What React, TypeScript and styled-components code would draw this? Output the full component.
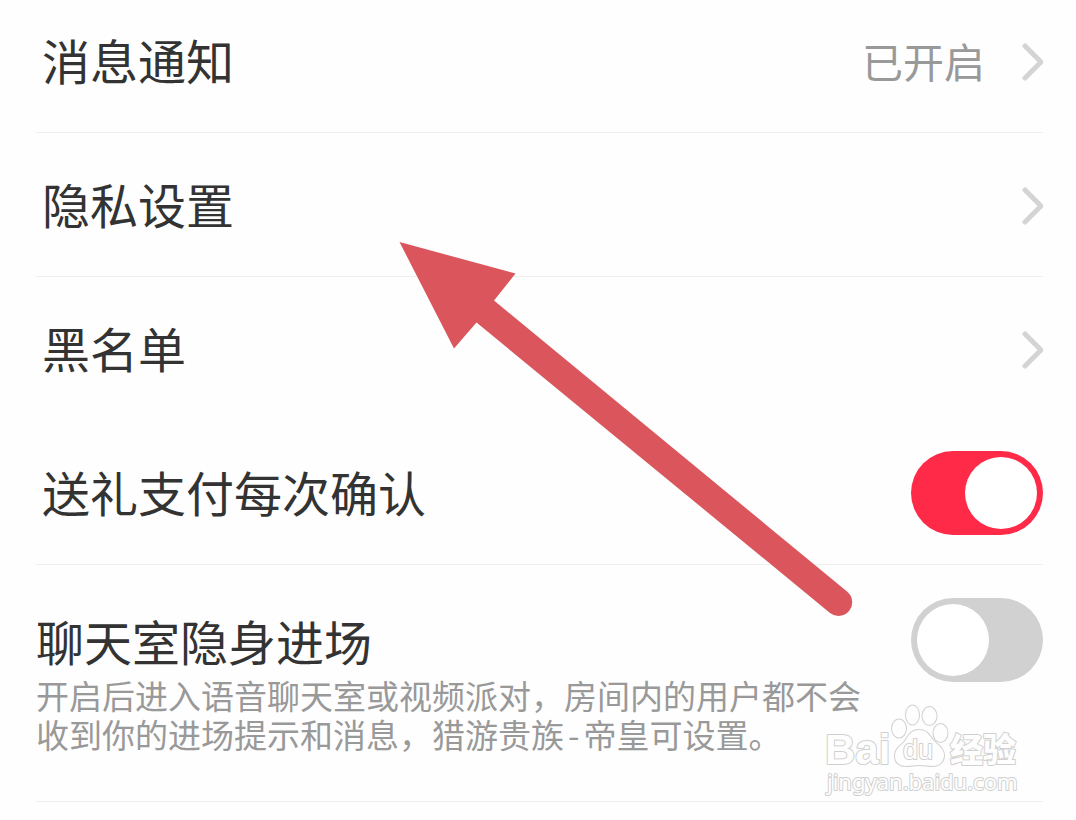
import React from 'react';
import styled, { createGlobalStyle } from 'styled-components';

const GlobalStyle = createGlobalStyle`
  * { box-sizing: border-box; }
  body {
    margin: 0;
    background: #fefefe;
    color: #333;
    font-family: "Noto Sans CJK SC", sans-serif;
  }
`;

const Page = styled.main`
  position: relative;
  padding: 0 33px 18px 36px;
  overflow: hidden;
`;

const List = styled.ul`
  margin: 0;
  padding: 0;
  list-style: none;
`;

const Item = styled.li<{ $divided?: boolean }>`
  border-bottom: 1px solid ${(p) => (p.$divided ? '#efefef' : 'transparent')};
`;

const rowBase = `
  display: flex;
  align-items: center;
  justify-content: space-between;
  width: 100%;
  padding: 39px 0 36px 6px;
  font-size: 48px;
  line-height: 62px;
`;

const LinkRow = styled.a`
  ${rowBase}
  color: inherit;
  text-decoration: none;
  ${Item}:first-child & { padding-top: 28px; }
`;

const SwitchRow = styled.div`
  ${rowBase}
`;

const Title = styled.span`
  padding-bottom: 6px;
`;

const Label = styled.label``;

const Trailing = styled.span`
  display: flex;
  align-items: center;
  gap: 36px;
`;

const Status = styled.span`
  padding-bottom: 4px;
  color: #999;
  font-size: 41px;
`;

const ChevronIcon = styled.svg`
  display: block;
  width: 22px;
  height: 40px;
  fill: none;
  stroke: #d4d4d4;
  stroke-width: 5;
  stroke-linecap: round;
  stroke-linejoin: round;
`;

const Switch = styled.input`
  appearance: none;
  display: flex;
  align-items: center;
  flex: none;
  width: 132px;
  height: 84px;
  margin: -9px 0 -7px;
  padding: 0 6px;
  border-radius: 42px;
  background: #d1d1d1;
  cursor: pointer;

  &::before {
    content: "";
    width: 72px;
    height: 72px;
    border-radius: 50%;
    background: #fff;
  }

  &:checked {
    justify-content: flex-end;
    background: #ff2a48;
  }
`;

const DetailRow = styled.div`
  display: flex;
  align-items: flex-start;
  justify-content: space-between;
  padding: 39px 0 47px;
`;

const DetailText = styled.div`
  max-width: 832px;
  font-size: 48px;
  line-height: 72px;
`;

const DetailSwitch = styled(Switch)`
  margin: -6px 0 0;
`;

const Description = styled.p`
  margin: 0;
  color: #999;
  font-size: 33px;
  line-height: 39px;
`;

const Dash = styled.span`
  margin: 0 4px;
`;

const Arrow = styled.svg`
  position: absolute;
  top: 241px;
  left: 399px;
  width: 456px;
  height: 378px;
  fill: #da565c;
  pointer-events: none;
`;

const Watermark = styled.svg`
  position: absolute;
  top: 700px;
  right: 52px;
  width: 200px;
  height: 100px;
  pointer-events: none;
  fill: #fefefe;
  stroke: #d0d0d0;
  stroke-width: 2;
  stroke-linejoin: round;
  paint-order: stroke;
`;

const Chevron = () => (
  <ChevronIcon viewBox="0 0 22 40" aria-hidden="true">
    <path d="M4 4 20 20 4 36" />
  </ChevronIcon>
);

export default function App() {
  return (
    <Page>
      <GlobalStyle />
      <List>
        <Item $divided>
          <LinkRow href="#notifications">
            <Title>消息通知</Title>
            <Trailing>
              <Status>已开启</Status>
              <Chevron />
            </Trailing>
          </LinkRow>
        </Item>
        <Item $divided>
          <LinkRow href="#privacy">
            <Title>隐私设置</Title>
            <Chevron />
          </LinkRow>
        </Item>
        <Item>
          <LinkRow href="#blacklist">
            <Title>黑名单</Title>
            <Chevron />
          </LinkRow>
        </Item>
        <Item $divided>
          <SwitchRow>
            <Title as="label" htmlFor="confirm">送礼支付每次确认</Title>
            <Switch id="confirm" type="checkbox" role="switch" defaultChecked />
          </SwitchRow>
        </Item>
        <Item $divided>
          <DetailRow>
            <DetailText>
              <Label htmlFor="stealth">聊天室隐身进场</Label>
              <Description id="stealth-note">
                开启后进入语音聊天室或视频派对，房间内的用户都不会收到你的进场提示和消息，猎游贵族<Dash>-</Dash>帝皇可设置。
              </Description>
            </DetailText>
            <DetailSwitch id="stealth" type="checkbox" role="switch" aria-describedby="stealth-note" />
          </DetailRow>
        </Item>
      </List>

      <Arrow viewBox="399 241 456 378" aria-hidden="true">
        <path d="M399.500 242 515.500 273.500 494 300.500 847 591.500A13.500 13.500 0 0 1 830 613L476.500 322.500 454 348.500Z" />
      </Arrow>

      <Watermark viewBox="824 700 200 100">
        <text x="825" y="764" fontFamily="Liberation Sans, sans-serif" fontWeight="700" fontSize="42">Bai</text>
        <ellipse cx="899" cy="728.500" rx="7" ry="9" />
        <ellipse cx="912.500" cy="715" rx="6.500" ry="9.500" />
        <ellipse cx="929.500" cy="716" rx="7" ry="9" />
        <ellipse cx="940.500" cy="733" rx="7" ry="9" />
        <path d="M919 730C911 730 908 736 905 741C901 746 895 748 895 756C895 763 900 766 906 766C911 766 914 765 919 765C924 765 928 766 933 766C939 766 944 762 944 755C944 748 937 745 933 740C929 735 927 730 919 730Z" />
        <text x="903" y="759" fontFamily="Liberation Sans, sans-serif" fontSize="27">du</text>
        <text x="950" y="762" fontFamily="Noto Sans CJK SC, sans-serif" fontWeight="900" fontSize="33">经验</text>
        <text x="827" y="790" fontFamily="Noto Sans, sans-serif" fontSize="22">jingyan.baidu.com</text>
      </Watermark>
    </Page>
  );
}
